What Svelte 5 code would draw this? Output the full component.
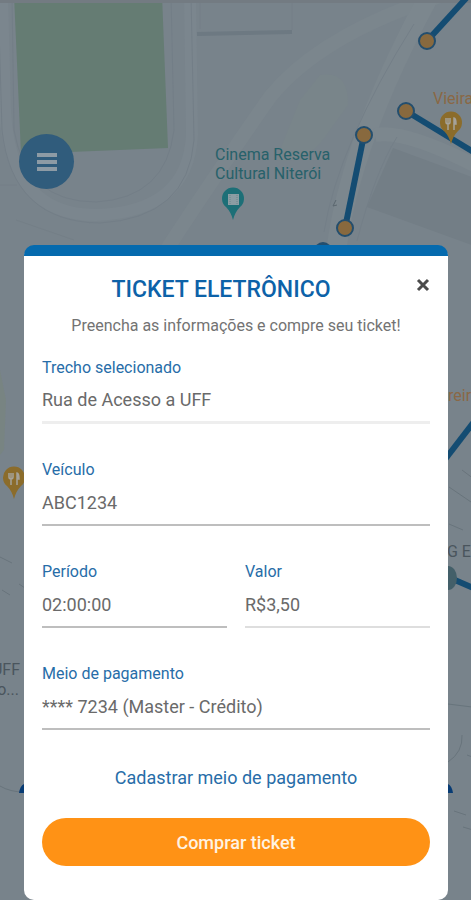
<script lang="ts">
	let menuOpen = $state(false);
	let visible = $state(true);

	let section = 'Rua de Acesso a UFF';
	let plate = $state('ABC1234');
	let period = $state('02:00:00');
	let price = 'R$3,50';

	const cards = ['**** 7234 (Master - Crédito)'];
	let card = $state(cards[0]);

	const stretches = [
		{ x1: 427, y1: 41, x2: 470, y2: -6 },
		{ x1: 406, y1: 111, x2: 480, y2: 156 },
		{ x1: 364, y1: 135, x2: 345, y2: 228 },
		{ x1: 440, y1: 466, x2: 480, y2: 414 },
		{ x1: 448, y1: 577, x2: 480, y2: 591 },
	];

	const stops = [
		{ x: 427, y: 41 },
		{ x: 406, y: 111 },
		{ x: 364, y: 135 },
		{ x: 345, y: 228 },
	];

	const restaurants = [
		{ x: 451, y: 123 },
		{ x: 14, y: 478 },
	];
</script>

<div class="page">
	<svg class="map" viewBox="0 0 471 900" preserveAspectRatio="xMidYMin slice" aria-hidden="true">
		<rect width="471" height="900" fill="#78838b" />

		<!-- stadium -->
		<path d="M2 -5 L5 110 Q10 215 96 215 Q188 212 192 135 L190 -5" fill="none" stroke="#7b868e" stroke-width="12" />
		<path d="M12 -5 L14 130 Q26 202 96 202 Q166 198 174 130 L171 -5" fill="none" stroke="#737e87" />
		<path d="M-2 -5 L2 130 Q12 222 100 223 Q188 218 194 140 L191 -5" fill="none" stroke="#737e87" />
		<path d="M14 -5 H162 L168 148 L21 154 Z" fill="#657c73" />

		<!-- streets -->
		<path d="M160 260 Q205 190 270 97 Q320 35 440 -4" fill="none" stroke="#7b868d" stroke-width="14" />
		<path d="M335 260 Q348 145 429 -4" fill="none" stroke="#7c878e" stroke-width="20" />
		<path d="M375 135 Q405 129 480 168" fill="none" stroke="#7c878e" stroke-width="14" />
		<path d="M324 232 Q338 145 414 24 M357 241 Q375 172 397 137" fill="none" stroke="#747f88" />
		<path d="M393 148 L480 180 V248 L367 207 Z" fill="#737e86" />
		<path d="M320 75 Q349 70 348 105 L330 130 Q308 165 276 160 L300 100 Z" fill="#79858a" />
		<path d="M197 34 L292 32" stroke="#6d7982" stroke-width="4" />
		<path d="M200 0 V29 M292 0 V30 M0 185 H17 M16 220 L74 240" fill="none" stroke="#747f87" />
		<path d="M333 206 l3 -6 M333 206 l4 -1" stroke="#5b676f" fill="none" />
		<path d="M0 557 L12 563 M2 590 L10 595 M19 584 L25 588 M0 786 Q10 792 24 792" fill="none" stroke="#68747c" />
		<path d="M449 487 L471 502 M462 470 L474 479 M449 524 L463 530 M448 704 L472 707 M462 735 Q463 752 448 762 M454 811 L466 815 M463 827 L473 830 M467 755 L475 758" fill="none" stroke="#68747c" />
		<path d="M0 370 L6 400 L4 450 L0 455 Z" fill="#788482" />
		<rect width="471" height="3" fill="#737b82" />

		<!-- parking stretches -->
		{#each stretches as s}
			<line x1={s.x1} y1={s.y1} x2={s.x2} y2={s.y2} stroke="#144c72" stroke-width="6" />
		{/each}
		{#each stops as s}
			<circle cx={s.x} cy={s.y} r="8" fill="#88693e" stroke="#234e6e" stroke-width="2" />
		{/each}
		<circle cx="323" cy="251" r="9" fill="#234e6e" />
		<ellipse cx="448" cy="578" rx="9" ry="12" fill="#435f69" />
		<path d="M19 793 Q20 786 24 784 V793 Z M448 784 Q452 786 453 793 H448 Z" fill="#073b74" />

		<!-- places -->
		{#each restaurants as r}
			<g transform="translate({r.x} {r.y})">
				<path d="M0 21 Q-2 13 -7 8 A11 11 0 1 1 7 8 Q2 13 0 21 Z" fill="#8b6c2b" />
				<path d="M-5 -5 V-1 Q-5 1 -3 1 Q-1 1 -1 -1 V-5 M-3 -5 V7" fill="none" stroke="#a5a29a" stroke-width="1.5" />
				<path d="M3 7 V-5 Q5 -5 5 1 H3" fill="#a5a29a" stroke="#a5a29a" stroke-width="1.5" />
			</g>
		{/each}
		<g transform="translate(233 199)">
			<path d="M0 21 Q-2 13 -7 8 A11 11 0 1 1 7 8 Q2 13 0 21 Z" fill="#1d6f77" />
			<rect x="-5" y="-5" width="11" height="11" fill="#8b9da3" />
			<path d="M-3 -4 V5 M4 -4 V5" stroke="#68858c" stroke-dasharray="1 1" />
		</g>

		<g class="places">
			<text class="culture" x="215" y="160">Cinema Reserva</text>
			<text class="culture" x="215" y="179">Cultural Niterói</text>
			<text class="food" x="433" y="104">Vieira</text>
			<text class="food" x="448" y="401">reira</text>
			<text x="447" y="557">G E</text>
			<text x="20" y="675" text-anchor="end">UFF</text>
			<text x="19" y="695" text-anchor="end">o...</text>
		</g>
	</svg>

	<header class="topbar">
		<button class="menu-btn" aria-label="Menu" aria-expanded={menuOpen} onclick={() => (menuOpen = !menuOpen)}>
			<svg width="22" height="20" viewBox="0 0 22 20">
				<path d="M1 3h20M1 10h20M1 17h20" stroke="currentColor" stroke-width="4" />
			</svg>
		</button>
	</header>

	{#if visible}
		<div class="modal" role="dialog" aria-labelledby="ticket-title">
			<button class="close-btn" aria-label="Fechar" onclick={() => (visible = false)}>
				<svg width="14" height="14" viewBox="0 0 14 14">
					<path d="M2 2l10 10M12 2L2 12" stroke="currentColor" stroke-width="3" />
				</svg>
			</button>
			<h1 class="modal-title" id="ticket-title">TICKET ELETRÔNICO</h1>
			<p class="modal-subtitle">Preencha as informações e compre seu ticket!</p>

			<form class="form" onsubmit={(e) => e.preventDefault()}>
				<div class="field">
					<label for="section">Trecho selecionado</label>
					<input class="locked" id="section" type="text" value={section} readonly />
				</div>
				<div class="field">
					<label for="plate">Veículo</label>
					<input id="plate" type="text" bind:value={plate} />
				</div>
				<div class="row">
					<div class="field">
						<label for="period">Período</label>
						<input id="period" type="text" bind:value={period} />
					</div>
					<div class="field">
						<label for="price">Valor</label>
						<input class="computed" id="price" type="text" value={price} readonly />
					</div>
				</div>
				<div class="field">
					<label for="card">Meio de pagamento</label>
					<select id="card" bind:value={card}>
						{#each cards as c}
							<option value={c}>{c}</option>
						{/each}
					</select>
				</div>

				<a class="add-card" href="#pagamento">Cadastrar meio de pagamento</a>
				<button class="submit-btn" type="submit">Comprar ticket</button>
			</form>
		</div>
	{/if}
</div>

<style>
	:global(body) {
		margin: 0;
		background: #78838b;
	}

	.page {
		position: relative;
		box-sizing: border-box;
		min-height: 100vh;
		padding: 134px 23px 0 24px;
		overflow: hidden;
		font-family: Roboto, sans-serif;
	}

	.map {
		position: absolute;
		inset: 0;
		width: 100%;
		height: 100%;
	}

	.places {
		font-size: 16px;
		fill: #4a555d;
	}

	.culture {
		fill: #27616a;
	}

	.food {
		fill: #8a6845;
	}

	.topbar {
		position: relative;
		height: 111px;
		margin-left: -5px;
	}

	.menu-btn {
		display: flex;
		align-items: center;
		justify-content: center;
		width: 55px;
		height: 55px;
		padding: 0;
		border: 0;
		border-radius: 50%;
		background: #305c7c;
		color: #8d9ba5;
	}

	.modal {
		position: relative;
		padding: 20px 18px 34px;
		border-top: 11px solid #056aae;
		border-radius: 10px;
		background: #fff;
	}

	.close-btn {
		position: absolute;
		top: 17px;
		right: 13px;
		display: flex;
		padding: 5px;
		border: 0;
		background: none;
		color: #4c4c4c;
	}

	.modal-title {
		margin: 0;
		padding-right: 30px;
		font-size: 23px;
		font-weight: 500;
		line-height: 28px;
		text-align: center;
		color: #0d62a8;
	}

	.modal-subtitle {
		margin: 12px 0 22px;
		font-size: 16px;
		line-height: 20px;
		text-align: center;
		color: #737373;
	}

	.form {
		display: flex;
		flex-direction: column;
		gap: 36px;
	}

	.row {
		display: grid;
		grid-template-columns: 1fr 1fr;
		gap: 18px;
	}

	.field {
		display: flex;
		flex-direction: column;
		min-width: 0;
	}

	label {
		font-size: 16px;
		line-height: 20px;
		color: #276da8;
	}

	input,
	select {
		box-sizing: border-box;
		width: 100%;
		height: 46px;
		padding: 0;
		border: 0;
		border-bottom: 2px solid #bebebe;
		border-radius: 0;
		outline: 0;
		appearance: none;
		background: none;
		font-family: inherit;
		font-size: 18px;
		color: #6a6a6a;
	}

	.locked {
		border-bottom: 3px solid #eee;
	}

	.computed {
		border-bottom-color: #dedede;
	}

	.add-card {
		align-self: center;
		font-size: 18px;
		line-height: 24px;
		text-decoration: none;
		color: #276da8;
	}

	.submit-btn {
		height: 48px;
		margin-top: -8px;
		border: 0;
		border-radius: 24px;
		background: #ff9215;
		font-family: inherit;
		font-size: 18px;
		font-weight: 500;
		color: #fff3e2;
	}
</style>
